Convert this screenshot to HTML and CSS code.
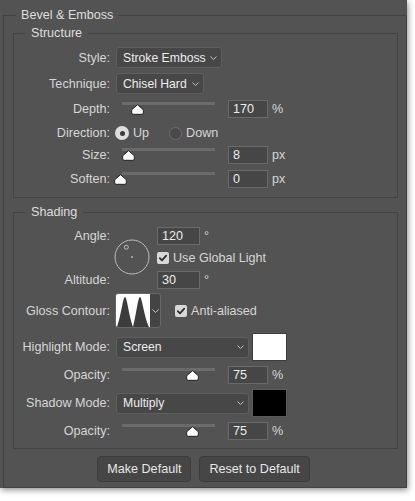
FILE: index.html
```html
<!DOCTYPE html>
<html>
<head>
<meta charset="utf-8">
<link rel="stylesheet" href="styles.css">
</head>
<body>
<div class="panel">
  <fieldset class="group outer">
    <legend>Bevel &amp; Emboss</legend>

    <fieldset class="group sub structure">
      <legend>Structure</legend>
      <div class="row r-style">
        <span class="lbl">Style:</span>
        <div class="select w-style"><span>Stroke Emboss</span><svg class="chev" width="7" height="4" viewBox="0 0 7 4"><polyline points="0.5,0.5 3.5,3.5 6.5,0.5"/></svg></div>
      </div>
      <div class="row r-tech">
        <span class="lbl">Technique:</span>
        <div class="select w-tech"><span>Chisel Hard</span><svg class="chev" width="7" height="4" viewBox="0 0 7 4"><polyline points="0.5,0.5 3.5,3.5 6.5,0.5"/></svg></div>
      </div>
      <div class="row r-slider r-depth">
        <span class="lbl">Depth:</span>
        <div class="slider"><div class="track"></div><svg class="thumb" style="left:14.5px" width="13" height="11" viewBox="0 0 13 11"><path d="M6.5 0.7 L11.8 5.3 Q12.3 5.8 12.3 6.6 V8.9 Q12.3 10.3 10.9 10.3 H2.1 Q0.7 10.3 0.7 8.9 V6.6 Q0.7 5.8 1.2 5.3 Z"/></svg></div>
        <div class="num">170</div><span class="unit">%</span>
      </div>
      <div class="row r-dir">
        <span class="lbl">Direction:</span>
        <div class="radio first"><span class="dot on"></span><span>Up</span></div>
        <div class="radio second"><span class="dot off"></span><span>Down</span></div>
      </div>
      <div class="row r-slider r-size">
        <span class="lbl">Size:</span>
        <div class="slider"><div class="track"></div><svg class="thumb" style="left:6px" width="13" height="11" viewBox="0 0 13 11"><path d="M6.5 0.7 L11.8 5.3 Q12.3 5.8 12.3 6.6 V8.9 Q12.3 10.3 10.9 10.3 H2.1 Q0.7 10.3 0.7 8.9 V6.6 Q0.7 5.8 1.2 5.3 Z"/></svg></div>
        <div class="num">8</div><span class="unit">px</span>
      </div>
      <div class="row r-slider r-soften">
        <span class="lbl">Soften:</span>
        <div class="slider"><div class="track"></div><svg class="thumb" style="left:-2px" width="13" height="11" viewBox="0 0 13 11"><path d="M6.5 0.7 L11.8 5.3 Q12.3 5.8 12.3 6.6 V8.9 Q12.3 10.3 10.9 10.3 H2.1 Q0.7 10.3 0.7 8.9 V6.6 Q0.7 5.8 1.2 5.3 Z"/></svg></div>
        <div class="num">0</div><span class="unit">px</span>
      </div>
    </fieldset>

    <fieldset class="group sub shading">
      <legend>Shading</legend>
      <div class="angle">
        <span class="glbl a-angle">Angle:</span>
        <svg class="dial" width="36" height="36" viewBox="0 0 36 36">
          <circle cx="18" cy="18" r="17" class="ring"/>
          <circle cx="12.3" cy="8.2" r="2" class="ring"/>
          <circle cx="18" cy="18" r="0.9" class="pt"/>
        </svg>
        <div class="a-in1"><div class="num wide">120</div><span class="deg">°</span></div>
        <div class="a-chk"><span class="cb"><svg width="12" height="12" viewBox="0 0 12 12"><path d="M2.8 6.2 L5 8.4 L9.2 3.6"/></svg></span><span>Use Global Light</span></div>
        <span class="glbl a-alt">Altitude:</span>
        <div class="a-in2"><div class="num wide">30</div><span class="deg">°</span></div>
      </div>
      <div class="row r-gloss">
        <span class="lbl">Gloss Contour:</span>
        <div class="contour">
          <svg class="curve" width="34" height="33" viewBox="0 0 34 33"><path d="M1 33 C5 22 7 3 9 3 C11 3 13 22 17 33 C20 22 22 3 24 3 C26 3 28 22 33 33 Z"/></svg>
          <span class="cpick"><svg class="chev" width="7" height="4" viewBox="0 0 7 4"><polyline points="0.5,0.5 3.5,3.5 6.5,0.5"/></svg></span>
        </div>
        <div class="chk anti"><span class="cb"><svg width="12" height="12" viewBox="0 0 12 12"><path d="M2.8 6.2 L5 8.4 L9.2 3.6"/></svg></span><span>Anti-aliased</span></div>
      </div>
      <div class="row r-mode">
        <span class="lbl">Highlight Mode:</span>
        <div class="select w-mode"><span>Screen</span><svg class="chev" width="7" height="4" viewBox="0 0 7 4"><polyline points="0.5,0.5 3.5,3.5 6.5,0.5"/></svg></div>
        <span class="swatch white"></span>
      </div>
      <div class="row r-slider r-op">
        <span class="lbl">Opacity:</span>
        <div class="slider"><div class="track"></div><svg class="thumb" style="left:69.5px" width="13" height="11" viewBox="0 0 13 11"><path d="M6.5 0.7 L11.8 5.3 Q12.3 5.8 12.3 6.6 V8.9 Q12.3 10.3 10.9 10.3 H2.1 Q0.7 10.3 0.7 8.9 V6.6 Q0.7 5.8 1.2 5.3 Z"/></svg></div>
        <div class="num">75</div><span class="unit">%</span>
      </div>
      <div class="row r-mode">
        <span class="lbl">Shadow Mode:</span>
        <div class="select w-mode"><span>Multiply</span><svg class="chev" width="7" height="4" viewBox="0 0 7 4"><polyline points="0.5,0.5 3.5,3.5 6.5,0.5"/></svg></div>
        <span class="swatch black"></span>
      </div>
      <div class="row r-slider r-op">
        <span class="lbl">Opacity:</span>
        <div class="slider"><div class="track"></div><svg class="thumb" style="left:69.5px" width="13" height="11" viewBox="0 0 13 11"><path d="M6.5 0.7 L11.8 5.3 Q12.3 5.8 12.3 6.6 V8.9 Q12.3 10.3 10.9 10.3 H2.1 Q0.7 10.3 0.7 8.9 V6.6 Q0.7 5.8 1.2 5.3 Z"/></svg></div>
        <div class="num">75</div><span class="unit">%</span>
      </div>
    </fieldset>

    <div class="buttons">
      <button class="btn">Make Default</button>
      <button class="btn">Reset to Default</button>
    </div>
  </fieldset>
</div>
</body>
</html>
```

FILE: styles.css
```css
* { box-sizing: border-box; }
html, body { margin: 0; padding: 0; }
body {
  background: #ffffff;
  width: 415px;
  height: 501px;
  overflow: hidden;
  font-family: "Liberation Sans", Arial, sans-serif;
  font-size: 12.6px;
  color: #d6d6d6;
}
.panel {
  width: 407px;
  height: 488px;
  background: #535353;
  padding-top: 7px;
  box-shadow: 1px 2px 6px rgba(0, 0, 0, 0.45);
  display: flow-root;
}
.group {
  border: 1px solid #444444;
  margin: 0;
  padding: 0;
  min-width: 0;
}
.group > legend {
  line-height: 17px;
  color: #dedede;
}
.outer {
  margin-left: 3px;
  height: 481px;
  border-color: #424242;
}
.outer > legend { margin-left: 12px; padding: 0 5px; }
.sub { margin: 0 8px 0 9px; }
.sub > legend { margin-left: 11px; padding: 0 6px; }
.structure { margin-top: 1px; padding: 5px 0 9px; }
.shading { margin-top: 6px; padding: 6px 0 8px; }

.row { display: flex; align-items: center; }
.lbl {
  flex: none;
  width: 96px;
  margin-right: 6px;
  text-align: right;
  white-space: nowrap;
}
.r-style { height: 21px; }
.r-tech { height: 21px; margin-top: 5px; }
.r-slider { height: 18px; }
.r-depth { margin-top: 6px; }
.r-dir { height: 18px; margin-top: 6px; }
.r-size { margin-top: 4px; }
.r-soften { margin-top: 6px; }

.select {
  flex: none;
  display: flex;
  align-items: center;
  justify-content: space-between;
  height: 21px;
  padding: 0 4px 0 6px;
  background: #474747;
  border: 1px solid #5e5e5e;
  border-radius: 3px;
  color: #ececec;
  font-size: 12.2px;
  white-space: nowrap;
}
.w-style { width: 106px; }
.w-tech { width: 88px; }
.w-mode { width: 133px; }
.chev { flex: none; }
.chev polyline { fill: none; stroke: #c4c4c4; stroke-width: 1; }

.slider { position: relative; flex: none; width: 106px; height: 18px; }
.track { margin: 2px 0 0 6px; width: 93px; height: 3px; background: #6b6b6b; }
.thumb { position: absolute; top: 4px; }
.thumb path { fill: #ffffff; stroke: #1e1e1e; stroke-width: 1; }

.num {
  flex: none;
  width: 40px;
  height: 18px;
  margin-left: 6px;
  padding-left: 4px;
  line-height: 16px;
  background: #464646;
  border: 1px solid #6a6a6a;
  color: #ececec;
}
.unit { margin-left: 4px; }

.radio { display: flex; align-items: center; gap: 4px; }
.radio.first { margin-left: -1px; }
.radio.second { margin-left: 20px; }
.dot { flex: none; width: 14px; height: 14px; border-radius: 50%; }
.dot.on { background: #dedede; display: grid; place-items: center; }
.dot.on::after { content: ""; width: 5px; height: 5px; border-radius: 50%; background: #3b3b3b; }
.dot.off { width: 13px; height: 13px; background: #4a4a4a; border: 1px solid #6c6c6c; }

.angle {
  display: grid;
  grid-template-columns: 96px 47px auto;
  grid-template-rows: 18px 26px 18px;
}
.glbl { text-align: right; align-self: center; }
.a-angle { grid-column: 1; grid-row: 1; }
.a-alt { grid-column: 1; grid-row: 3; }
.dial { grid-column: 2; grid-row: 1 / 4; margin: 12px 0 0 4px; }
.dial .ring { fill: none; stroke: #bdbdbd; stroke-width: 1; }
.dial .pt { fill: #bdbdbd; }
.a-in1 { grid-column: 3; grid-row: 1; display: flex; align-items: center; }
.a-in2 { grid-column: 3; grid-row: 3; display: flex; align-items: center; }
.a-chk { grid-column: 3; grid-row: 2; display: flex; align-items: center; gap: 4px; }
.num.wide { width: 43px; margin-left: 0; }
.deg { margin-left: 4px; }

.cb {
  flex: none;
  width: 12px;
  height: 12px;
  border-radius: 2px;
  background: #d8d8d8;
  display: block;
}
.cb svg { display: block; }
.cb path { fill: none; stroke: #2e2e2e; stroke-width: 1.8; stroke-linecap: round; stroke-linejoin: round; }

.r-gloss { height: 35px; margin-top: 4px; }
.r-gloss .lbl { margin-right: 5px; }
.contour {
  flex: none;
  display: flex;
  width: 46px;
  height: 35px;
  border: 1px solid #676767;
  border-radius: 3px;
  background: #444444;
  overflow: hidden;
}
.curve { display: block; background: #ffffff; flex: none; }
.curve path { fill: #3c3c3c; }
.cpick { flex: 1; display: grid; place-items: center; }
.chk { display: flex; align-items: center; gap: 4px; }
.anti { margin-left: 14px; }

.r-mode { height: 28px; margin-top: 5px; }
.r-op { margin-top: 5px; }
.swatch { flex: none; width: 35px; height: 28px; margin-left: 3px; }
.swatch.white { background: #ffffff; border: 1px solid #3c3c3c; }
.swatch.black { background: #000000; border: 1px solid #5a5a5a; }

.buttons {
  display: flex;
  justify-content: center;
  gap: 8px;
  margin: 7px 3px 0 0;
}
.btn {
  height: 26px;
  padding: 0 9px;
  font: inherit;
  color: #e6e6e6;
  background: #464646;
  border: 1px solid #3c3c3c;
  border-radius: 4px;
}
```
